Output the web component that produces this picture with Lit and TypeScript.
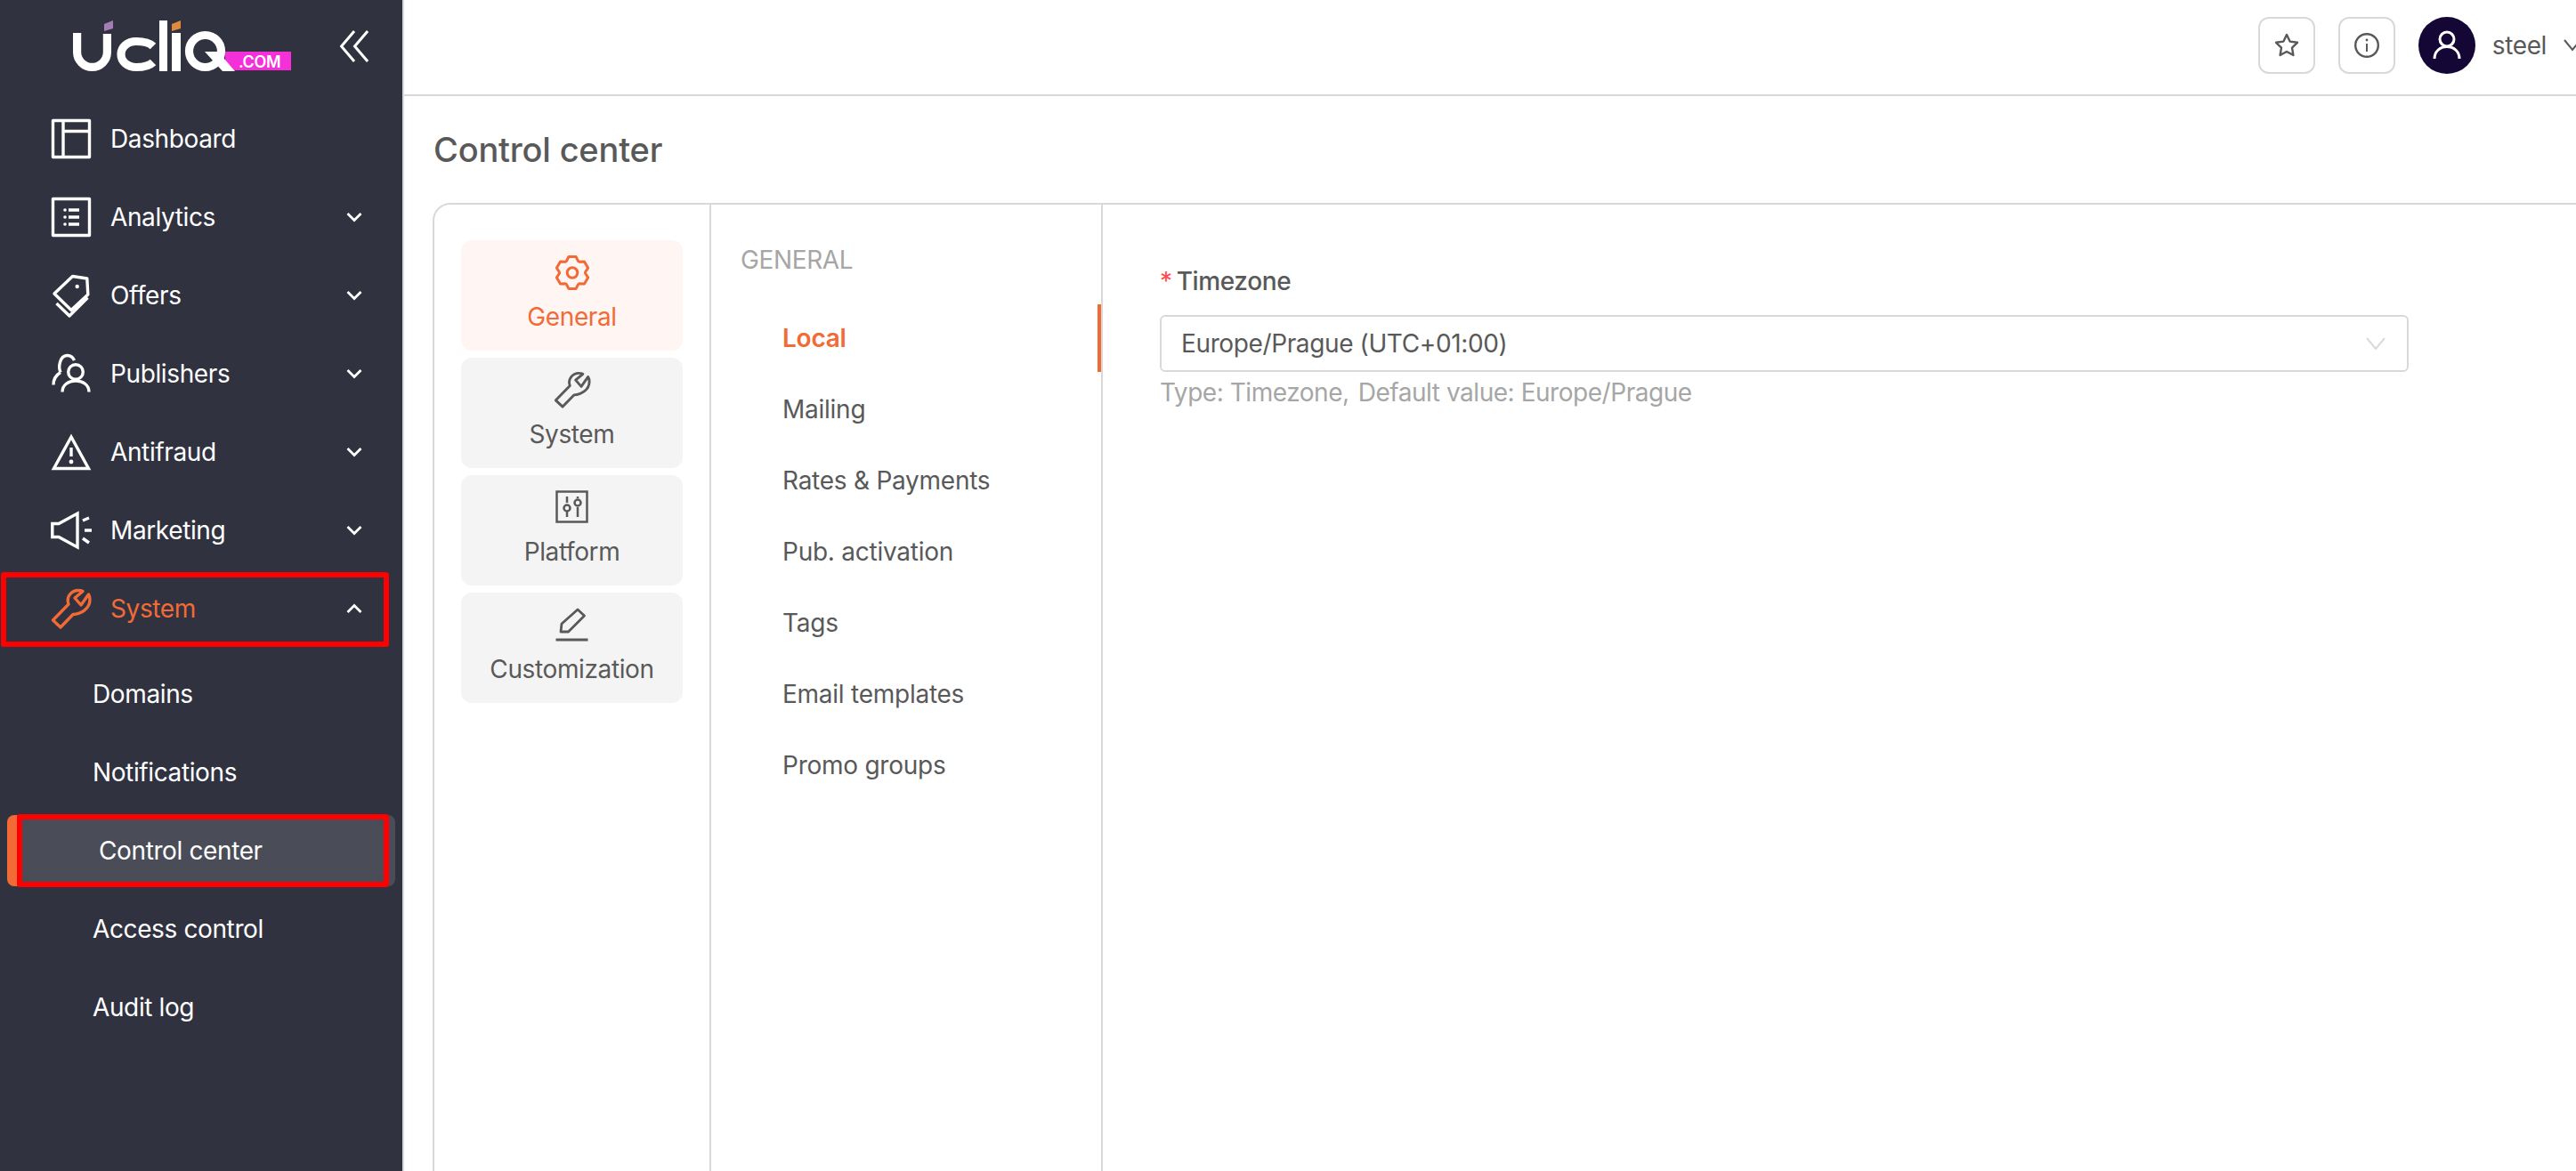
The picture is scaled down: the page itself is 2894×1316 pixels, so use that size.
import { LitElement, html, css, svg } from "lit";
import { customElement } from "lit/decorators.js";

const wrenchPath = svg`<path d="M1.5 35 L19 17 C16 9 22 1 31 1.5 C32.5 1.5 34 2 35 2.5 L26 10 L33 18 L41.5 6 C42.5 7.5 43 9.5 43 12 C43 22 33 28 24 28.5 L10 43 Z"/>`;

const ic = (content: unknown, size = 44, w = 3.4) => html`<svg class="ico" width=${size} height=${size} viewBox="0 0 44 44" fill="none" stroke="currentColor" stroke-width=${w} stroke-linejoin="round" aria-hidden="true">${content}</svg>`;

const navIcons: Record<string, unknown> = {
  dashboard: ic(svg`<rect x="1.5" y="1.5" width="41" height="41"/><path d="M13 2V42M13 13.5H42"/>`),
  analytics: ic(svg`<rect x="1.5" y="1.5" width="41" height="41"/><path d="M19 14H31M19 22H31M19 30H31"/><circle cx="15" cy="14" r="1.8" fill="currentColor" stroke="none"/><circle cx="15" cy="22" r="1.8" fill="currentColor" stroke="none"/><circle cx="15" cy="30" r="1.8" fill="currentColor" stroke="none"/>`),
  offers: ic(svg`<g transform="translate(0 -1)"><path d="M3 21 L23.5 1.5 L39.8 4 L40.8 22 L22 39.5 Z"/><path d="M5.5 33 L20 47 L40.5 26.5" transform="translate(0 -1)"/><circle cx="28.7" cy="13" r="2.2" fill="currentColor" stroke="none"/></g>`),
  publishers: ic(svg`<circle cx="27" cy="20" r="8.3"/><path d="M12 42.5C12 34.5 19 30 27 30S42 34.5 42 42.5"/><path d="M10 20.5C7 14 9.5 2 17 1.5C21 1.2 24 3.5 25.5 7M2 34.5C2 28 5 23.5 10 20.5"/>`),
  antifraud: ic(svg`<path d="M22 5 L2.5 40.5 H41.5 Z" stroke-linejoin="miter"/><path d="M22 17V27"/><circle cx="22" cy="33" r="2.4" fill="currentColor" stroke="none"/>`),
  marketing: ic(svg`<path d="M0.8 14.5 H8 L29 3 V41 L8 29.500 H0.8 Z" stroke-linejoin="miter"/><path d="M35 11 L42 8M37 22 H45M35 31 L42 36"/>`),
  system: ic(wrenchPath),
};

const gearPath = (() => {
  const cx = 20, cy = 20.5, ro = 18.4, ri = 14.6;
  const pt = (r: number, deg: number) => {
    const a = (deg * Math.PI) / 180;
    return `${(cx + r * Math.cos(a)).toFixed(2)} ${(cy + r * Math.sin(a)).toFixed(2)}`;
  };
  const parts: string[] = [];
  for (let i = 0; i < 6; i++) {
    const a = i * 60 - 90;
    parts.push(pt(ri, a - 27), pt(ro, a - 13), pt(ro, a + 13), pt(ri, a + 27));
  }
  return "M" + parts.join(" L") + " Z";
})();

const tabIcons: Record<string, unknown> = {
  general: html`<svg class="ico" width="40" height="40" viewBox="0 0 40 40" fill="none" stroke="currentColor" stroke-width="3" stroke-linejoin="round" aria-hidden="true"><path d=${gearPath}/><circle cx="20" cy="20.5" r="5.8"/></svg>`,
  system: ic(wrenchPath, 40, 3.2),
  platform: html`<svg class="ico" width="40" height="40" viewBox="0 0 40 40" fill="none" stroke="currentColor" stroke-width="2.5" aria-hidden="true"><rect x="2.5" y="2.5" width="34" height="34"/><path d="M14 8V15M14 25V31M26 8V10M26 20V31"/><circle cx="14" cy="21" r="3.5"/><circle cx="26" cy="15" r="3.5"/></svg>`,
  customization: html`<svg class="ico" width="40" height="40" viewBox="0 0 40 40" fill="none" stroke="currentColor" stroke-width="2.8" stroke-linejoin="round" aria-hidden="true"><path d="M7 28 L8 19 L26 3 L33.5 10 L15.5 28 Z"/><path d="M1.5 37H37.5" stroke-width="3"/></svg>`,
};

const chevron = (up = false) => html`<svg class=${up ? "chev up" : "chev"} width="18" height="12" viewBox="0 0 18 12" fill="none" stroke="currentColor" stroke-width="2.8" aria-hidden="true"><path d="M1.5 2 L9 9.5 L16.5 2"/></svg>`;

@customElement("app-root")
export class AppRoot extends LitElement {
  static styles = css`
    :host { display: flex; width: 2894px; height: 1316px; overflow: hidden; background: #fff; font-family: Inter, "Liberation Sans", sans-serif; font-size: 28px; line-height: 44px; letter-spacing: -0.38px; color: #595959; }
    * { box-sizing: border-box; }
    .ico { display: block; flex: none; overflow: visible; }

    .sidebar { width: 454px; flex: none; background: #30323f; border-right: 2px solid #d9d9d9; color: #fff; }
    .brand { height: 116px; padding: 22px 38px 0 82px; display: flex; justify-content: space-between; align-items: flex-start; }
    .collapse { margin-top: 12px; }
    .nav { display: flex; flex-direction: column; gap: 8px; margin: 0 8px 0 8px; }
    .item { position: relative; height: 80px; display: flex; align-items: center; padding: 0 37px 0 50px; border-radius: 8px; }
    .item .ico { margin-right: 22px; }
    .item .name { flex: 1; }
    .item.open { color: #f26a36; margin-bottom: 8px; }
    .chev { display: block; }
    .item .chev { color: #fff; }
    .chev.up { transform: rotate(180deg); }
    .sub { padding-left: 96px; }
    .sub.active { padding-left: 91px; background: #4a4c58; border-left: 12px solid #f26a36; }
    .mark { position: absolute; border: 6px solid #ff0000; border-radius: 3px; pointer-events: none; }
    .mark-system { left: -7px; right: 7px; top: -1px; bottom: -3px; }
    .mark-active { left: -1px; right: 7px; top: -1px; bottom: -1px; }

    .main { flex: 1; min-width: 0; display: flex; flex-direction: column; }
    .topbar { height: 108px; flex: none; border-bottom: 2px solid #d9d9d9; display: flex; justify-content: flex-end; align-items: flex-start; padding-top: 19px; overflow: hidden; }
    .btn { width: 64px; height: 64px; border: 2px solid #d9d9d9; border-radius: 12px; display: flex; align-items: center; justify-content: center; margin-right: 26px; background: #fff; }
    .avatar { width: 64px; height: 64px; border-radius: 50%; background: #140736; color: #fff; display: flex; align-items: center; justify-content: center; }
    .user { display: flex; align-items: center; height: 64px; flex: none; margin-right: -10px; }
    .uname { margin: 0 19px; }

    .page { flex: 1; min-height: 0; display: flex; flex-direction: column; padding-left: 32px; }
    .title { height: 120px; flex: none; display: flex; align-items: center; margin: 0; padding-left: 1px; font-size: 38px; font-weight: 500; letter-spacing: -0.2px; }
    .card { flex: 1; display: flex; margin: 0 -20px -20px 0; border: 2px solid #d9d9d9; border-radius: 20px; background: #fff; }

    .tabs { width: 311px; flex: none; border-right: 2px solid #d9d9d9; padding: 40px 0 0 30px; display: flex; flex-direction: column; gap: 8px; }
    .tab { width: 249px; height: 124px; border-radius: 12px; background: #f4f4f4; padding-top: 16px; display: flex; flex-direction: column; align-items: center; gap: 8px; text-align: center; }
    .tab.active { background: #fff6f3; color: #f26a36; }

    .menu { width: 440px; flex: none; border-right: 2px solid #d9d9d9; padding-top: 40px; }
    .menu-head { padding-left: 33px; color: #a6a6a6; margin-bottom: 28px; }
    .menu-list { display: flex; flex-direction: column; gap: 4px; letter-spacing: -0.25px; }
    .menu-item { position: relative; height: 76px; display: flex; align-items: center; padding-left: 80px; }
    .menu-item.active { color: #f26a36; font-weight: 600; }
    .menu-item.active::after { content: ""; position: absolute; top: 0; bottom: 0; right: 0; width: 4px; background: #f26a36; }

    .form { flex: 1; padding: 64px 0 0 64px; }
    .label { display: flex; margin-bottom: 16px; font-weight: 500; }
    .req { color: #ff4d4f; margin-right: 5px; font-weight: 400; }
    .select { width: 1403px; height: 64px; border: 2px solid #d9d9d9; border-radius: 6px; display: flex; align-items: center; justify-content: space-between; padding: 0 24px 0 22px; }
    .select svg { color: #d9d9d9; }
    .hint { margin-top: 1px; color: #a6a6a6; display: flex; gap: 10px; letter-spacing: -0.46px; }
  `;

  render() {
    const top = [
      ["dashboard", "Dashboard", false],
      ["analytics", "Analytics", true],
      ["offers", "Offers", true],
      ["publishers", "Publishers", true],
      ["antifraud", "Antifraud", true],
      ["marketing", "Marketing", true],
    ] as const;
    const tabs = [["general", "General"], ["system", "System"], ["platform", "Platform"], ["customization", "Customization"]];
    const menu = ["Local", "Mailing", "Rates & Payments", "Pub. activation", "Tags", "Email templates", "Promo groups"];
    return html`
      <aside class="sidebar">
        <div class="brand">
          <svg width="246" height="60" viewBox="82 22 246 60" aria-label="Ucliq.com logo">
            <rect x="253" y="58" width="74" height="21" fill="#f530d8"/>
            <g fill="none" stroke="#fff" stroke-width="9.2">
              <path d="M86.6 37 V58.5 A16.9 16.9 0 0 0 120.4 58.5 V38"/>
              <path d="M172 52 C168 48 160 46.500 153 46.500 C143 46.500 136 53 136 61 C136 69 143 75.500 153 75.500 C160 75.500 168 74 172 70"/>
              <circle cx="230.500" cy="57.500" r="18"/>
            </g>
            <rect x="179" y="23" width="9" height="57" fill="#fff"/>
            <rect x="193" y="37" width="10" height="43" fill="#fff"/>
            <path d="M230 58 H245 L264 80 H250 Z" fill="#fff"/>
            <path d="M117 27 L127 23 V32 L117 35 Z" fill="#a67cb8"/>
            <path d="M193 27 L203 23 V32 L193 35 Z" fill="#e08a3c"/>
            <text x="268" y="76" fill="#fff" font-family="Inter, sans-serif" font-size="18" font-weight="600">.COM</text>
          </svg>
          <svg class="collapse" width="32" height="36" viewBox="0 0 32 36" fill="none" stroke="#fff" stroke-width="3" aria-hidden="true"><path d="M16 1 L1.5 18 L16 35M31 1 L16.5 18 L31 35"/></svg>
        </div>
        <nav class="nav">
          ${top.map(([k, n, c]) => html`<div class="item">${navIcons[k]}<span class="name">${n}</span>${c ? chevron() : ""}</div>`)}
          <div class="item open">${navIcons.system}<span class="name">System</span>${chevron(true)}<span class="mark mark-system"></span></div>
          <div class="item sub">Domains</div>
          <div class="item sub">Notifications</div>
          <div class="item sub active">Control center<span class="mark mark-active"></span></div>
          <div class="item sub">Access control</div>
          <div class="item sub">Audit log</div>
        </nav>
      </aside>
      <div class="main">
        <header class="topbar">
          <div class="btn"><svg width="28" height="28" viewBox="0 0 28 28" fill="none" stroke="currentColor" stroke-width="2.4" stroke-linejoin="round" aria-hidden="true"><path d="M14 2 L17.6 9.6 L26 10.800 L20 16.600 L21.400 25 L14 21 L6.600 25 L8 16.600 L2 10.800 L10.400 9.600 Z"/></svg></div>
          <div class="btn"><svg width="30" height="30" viewBox="0 0 30 30" fill="none" stroke="currentColor" stroke-width="2.4" aria-hidden="true"><circle cx="15" cy="15" r="12.800"/><path d="M15 13V22" stroke-width="2"/><circle cx="15" cy="9" r="1.400" fill="currentColor" stroke="none"/></svg></div>
          <div class="user">
            <div class="avatar"><svg width="32" height="34" viewBox="0 0 32 34" fill="none" stroke="currentColor" stroke-width="3" aria-hidden="true"><circle cx="16" cy="10" r="8"/><path d="M2 32C2 24 8 18.500 16 18.500S30 24 30 32"/></svg></div>
            <span class="uname">steel</span>
            <svg width="24" height="16" viewBox="0 0 24 16" fill="none" stroke="currentColor" stroke-width="2" aria-hidden="true"><path d="M1 2 L10 13 L19 2"/></svg>
          </div>
        </header>
        <section class="page">
          <h1 class="title">Control center</h1>
          <div class="card">
            <div class="tabs">
              ${tabs.map(([k, n], i) => html`<div class=${i === 0 ? "tab active" : "tab"}>${tabIcons[k]}<span>${n}</span></div>`)}
            </div>
            <div class="menu">
              <div class="menu-head">GENERAL</div>
              <div class="menu-list">
                ${menu.map((m, i) => html`<div class=${i === 0 ? "menu-item active" : "menu-item"}>${m}</div>`)}
              </div>
            </div>
            <div class="form">
              <div class="label"><span class="req">*</span>Timezone</div>
              <div class="select"><span>Europe/Prague (UTC+01:00)</span><svg width="22" height="14" viewBox="0 0 22 14" fill="none" stroke="currentColor" stroke-width="2" aria-hidden="true"><path d="M1 1 L11 13 L21 1"/></svg></div>
              <div class="hint"><span>Type: Timezone,</span><span>Default value: Europe/Prague</span></div>
            </div>
          </div>
        </section>
      </div>
    `;
  }
}
